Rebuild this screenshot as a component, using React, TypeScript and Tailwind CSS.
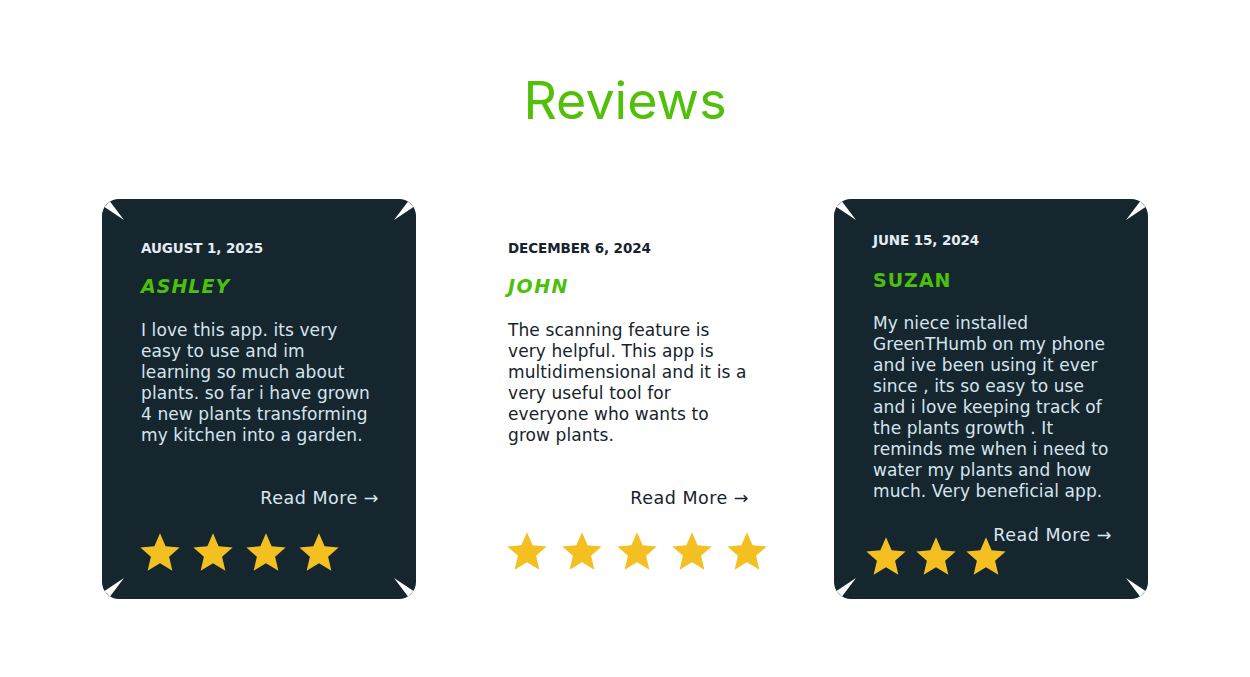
import React from "react";

function Star() {
  return (
    <svg width="40" height="40" viewBox="1 1 22 22" className="shrink-0">
      <path
        d="M12 1.2l3.1 7.1 7.7.7-5.8 5.1 1.8 7.6L12 17.7l-6.8 4 1.8-7.6L1.2 9l7.7-.7z"
        fill="#f4c021"
      />
    </svg>
  );
}

function Corner({ pos }: { pos: "tl" | "tr" | "bl" | "br" }) {
  const place =
    pos === "tl"
      ? "top-0 left-0"
      : pos === "tr"
      ? "top-0 right-0 -scale-x-100"
      : pos === "bl"
      ? "bottom-0 left-0 -scale-y-100"
      : "bottom-0 right-0 -scale-x-100 -scale-y-100";
  return (
    <svg
      width="26"
      height="26"
      viewBox="0 0 26 26"
      className={`absolute ${place}`}
    >
      <polygon points="2.5,8 8,2.5 22,21" fill="#ffffff" />
    </svg>
  );
}

function Stars({ n, gap }: { n: number; gap: string }) {
  return (
    <div className={`flex ${gap}`}>
      {Array.from({ length: n }).map((_, i) => (
        <Star key={i} />
      ))}
    </div>
  );
}

function Lines({ lines }: { lines: string[] }) {
  return (
    <>
      {lines.map((l, i) => (
        <span key={i} className="block whitespace-nowrap">
          {l}
        </span>
      ))}
    </>
  );
}

export default function App() {
  return (
    <div className="w-[1250px] h-[677px] bg-white overflow-hidden">
      <h1 className="pt-[69px] text-center font-['Inter',sans-serif] text-[52px] leading-[63px] font-normal text-[#52c00a]">
        Reviews
      </h1>
      <div className="mt-[67px] flex justify-center font-['DejaVu_Sans',sans-serif]">
        {/* Card 1 */}
        <div className="relative flex h-[400px] w-[314px] flex-col rounded-[17px] bg-[#15262f] pl-[39px] pr-[37px] pt-[41px]">
          <Corner pos="tl" />
          <Corner pos="tr" />
          <Corner pos="bl" />
          <Corner pos="br" />
          <div className="text-[13.5px] leading-4 font-bold tracking-[-0.1px] text-[#e3ecf3]">
            AUGUST 1, 2025
          </div>
          <div className="mt-[18px] text-[19px] leading-6 font-extrabold italic tracking-[1px] text-[#4cc00b]">
            ASHLEY
          </div>
          <p className="mt-[22px] text-[17px] leading-[21px] tracking-[0.1px] text-[#d6e4ee]">
            <Lines
              lines={[
                "I love this app. its very",
                "easy to use and im",
                "learning so much about",
                "plants. so far i have grown",
                "4 new plants transforming",
                "my kitchen into a garden.",
              ]}
            />
          </p>
          <div className="mt-[40px] text-right text-[17.5px] leading-6 tracking-[0.5px] text-[#dbe6ee]">
            Read More →
          </div>
          <div className="mt-[23px] -ml-px">
            <Stars n={4} gap="gap-[13px]" />
          </div>
        </div>

        {/* Card 2 */}
        <div className="relative ml-[54px] flex h-[400px] w-[314px] flex-col pl-[38px] pr-[35px] pt-[41px]">
          <div className="text-[13.5px] leading-4 font-bold tracking-[-0.1px] text-[#16232c]">
            DECEMBER 6, 2024
          </div>
          <div className="mt-[18px] text-[19px] leading-6 font-extrabold italic tracking-[1.5px] text-[#4cc00b]">
            JOHN
          </div>
          <p className="mt-[22px] text-[17px] leading-[21px] tracking-[0.1px] text-[#16232c]">
            <Lines
              lines={[
                "The scanning feature is",
                "very helpful. This app is",
                "multidimensional and it is a",
                "very useful tool for",
                "everyone who wants to",
                "grow plants.",
              ]}
            />
          </p>
          <div className="mt-[40px] text-right text-[17.5px] leading-6 tracking-[0.5px] text-[#16232c]">
            Read More →
          </div>
          <div className="mt-[22px] -ml-px">
            <Stars n={5} gap="gap-[15px]" />
          </div>
        </div>

        {/* Card 3 */}
        <div className="relative ml-[50px] flex h-[400px] w-[314px] flex-col rounded-[17px] bg-[#15262f] pl-[39px] pr-[36px] pt-[33px]">
          <Corner pos="tl" />
          <Corner pos="tr" />
          <Corner pos="bl" />
          <Corner pos="br" />
          <div className="text-[13.5px] leading-4 font-bold tracking-[-0.1px] text-[#e3ecf3]">
            JUNE 15, 2024
          </div>
          <div className="mt-[20px] text-[19px] leading-6 font-extrabold tracking-[1px] text-[#4cc00b]">
            SUZAN
          </div>
          <p className="mt-[21px] text-[17px] leading-[21px] tracking-[0.1px] text-[#d6e4ee]">
            <Lines
              lines={[
                "My niece installed",
                "GreenTHumb on my phone",
                "and ive been using it ever",
                "since , its so easy to use",
                "and i love keeping track of",
                "the plants growth . It",
                "reminds me when i need to",
                "water my plants and how",
                "much. Very beneficial app.",
              ]}
            />
          </p>
          <div className="mt-[21px] text-right text-[17.5px] leading-6 tracking-[0.5px] text-[#dbe6ee]">
            Read More →
          </div>
          <div className="relative -mt-[10px] -ml-[7px]">
            <Stars n={3} gap="gap-[10px]" />
          </div>
        </div>
      </div>
    </div>
  );
}
